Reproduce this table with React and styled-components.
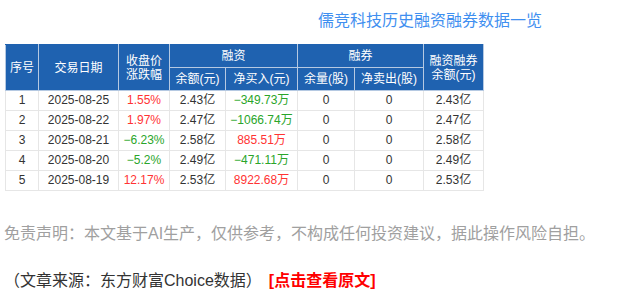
import styled, { createGlobalStyle } from 'styled-components';


const COLOR_HEAD = '#1f62b0';
const COLOR_UP = '#f33';
const COLOR_DOWN = '#2aa52a';
const FONT = '"Liberation Sans", Arial, "Noto Sans CJK SC", sans-serif';


const GlobalStyle = createGlobalStyle`
    body {
        margin: 0;
        background: #fff;
        font-family: ${FONT};
    }
`;

const Page = styled.div`
    width: 636px;
    height: 307px;
    padding: 0 4px;
    box-sizing: border-box;
    overflow: hidden;
`;
const Title = styled.h3`
    margin: 0;
    padding: 11px 0 0 314px;
    font-size: 16px;
    font-weight: normal;
    line-height: 20px;
    color: #3f8ff0;
`;
const Table = styled.table`
    margin: 13px 0 0 1px;
    border-collapse: collapse;
    table-layout: fixed;
    width: 479px;
    font-size: 12px;
    color: #333;
`;
const Th = styled.th`
    background: ${COLOR_HEAD};
    color: #fff;
    font-weight: normal;
    height: 22px;
    padding: 0;
    line-height: 14px;
    border: 1px solid #b5c9e2;
    border-top-color: ${COLOR_HEAD};
    text-align: center;
`;
const Td = styled.td`
    height: 19px;
    padding: 0;
    text-align: center;
    border: 1px solid #e6e6e6;
    line-height: 19px;
    color: ${props => props.$color || '#333'};
`;
const Disclaimer = styled.p`
    margin: 31px 0 0;
    font-size: 16px;
    line-height: 24px;
    color: #a0a0a0;
`;
const Source = styled.p`
    margin: 23px 0 0;
    font-size: 16px;
    line-height: 24px;
    color: #333;
`;
const SourceLink = styled.a`
    margin-left: 7px;
    color: #f00;
    font-weight: bold;
    text-decoration: none;
`;


const COLS = [33, 80, 51, 56, 72, 57, 69, 60];

const ROWS = [
    ['1', '2025-08-25', '1.55%', '2.43亿', '-349.73万', '0', '0', '2.43亿'],
    ['2', '2025-08-22', '1.97%', '2.47亿', '-1066.74万', '0', '0', '2.47亿'],
    ['3', '2025-08-21', '-6.23%', '2.58亿', '885.51万', '0', '0', '2.58亿'],
    ['4', '2025-08-20', '-5.2%', '2.49亿', '-471.11万', '0', '0', '2.49亿'],
    ['5', '2025-08-19', '12.17%', '2.53亿', '8922.68万', '0', '0', '2.53亿'],
];

function signColor(text) {
    return text.startsWith('-') ? COLOR_DOWN : COLOR_UP;
}


export default function App() {
    return (
        <Page>
            <GlobalStyle />
            <Title>儒竞科技历史融资融券数据一览</Title>
            <Table>
                <colgroup>
                    {COLS.map((w, i) => <col key={i} style={{ width: w }} />)}
                </colgroup>
                <thead>
                    <tr>
                        <Th rowSpan={2}>序号</Th>
                        <Th rowSpan={2}>交易日期</Th>
                        <Th rowSpan={2}>收盘价<br />涨跌幅</Th>
                        <Th colSpan={2}>融资</Th>
                        <Th colSpan={2}>融券</Th>
                        <Th rowSpan={2}>融资融券<br />余额(元)</Th>
                    </tr>
                    <tr>
                        <Th>余额(元)</Th>
                        <Th>净买入(元)</Th>
                        <Th>余量(股)</Th>
                        <Th>净卖出(股)</Th>
                    </tr>
                </thead>
                <tbody>
                    {ROWS.map(row => (
                        <tr key={row[0]}>
                            {row.map((cell, i) => (
                                <Td
                                    key={i}
                                    $color={(i === 2 || i === 4) ? signColor(cell) : undefined}
                                >
                                    {cell.replace(/^-/, '−')}
                                </Td>
                            ))}
                        </tr>
                    ))}
                </tbody>
            </Table>
            <Disclaimer>免责声明：本文基于AI生产，仅供参考，不构成任何投资建议，据此操作风险自担。</Disclaimer>
            <Source>
                （文章来源：东方财富Choice数据）
                <SourceLink href="#">[点击查看原文]</SourceLink>
            </Source>
        </Page>
    )
}
